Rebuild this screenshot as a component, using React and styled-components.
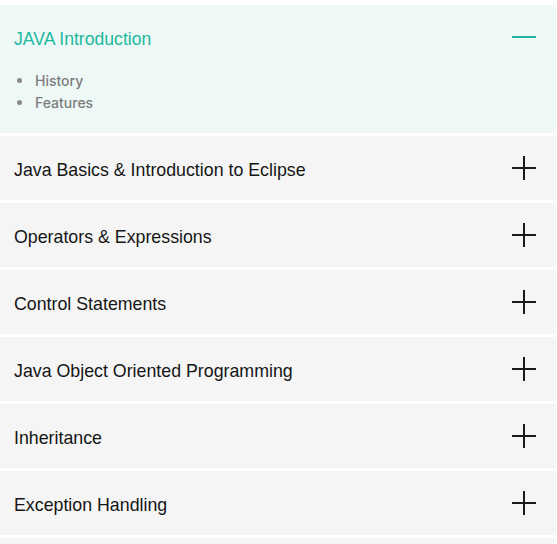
import React, { useState } from "react";
import styled, { createGlobalStyle } from "styled-components";

const GlobalStyle = createGlobalStyle`
  html, body {
    margin: 0;
    padding: 0;
    background: #ffffff;
  }
  body {
    font-family: "Liberation Sans", Arial, sans-serif;
  }
`;

const Wrapper = styled.div`
  width: 556px;
  padding-top: 5px;
  display: flex;
  flex-direction: column;
  gap: 3px;
`;

const Panel = styled.div`
  background: ${({ open }) => (open ? "#eef8f6" : "#f5f5f5")};
  display: flex;
  flex-direction: column;
`;

const Header = styled.button`
  height: 64px;
  display: flex;
  align-items: center;
  justify-content: space-between;
  padding: 0 20px 0 14px;
  border: none;
  background: transparent;
  cursor: pointer;
  text-align: left;
`;

const Title = styled.span`
  margin-top: 4px;
  font-family: "Liberation Sans", Arial, sans-serif;
  font-size: ${({ open }) => (open ? "17.6px" : "17.8px")};
  color: ${({ open }) => (open ? "#1db99e" : "#151515")};
`;

const List = styled.ul`
  list-style: none;
  margin: 0;
  padding: 0 14px 20px 17px;
`;

const Item = styled.li`
  display: flex;
  align-items: center;
  gap: 13px;
  height: 22px;
  font-family: Inter, "Open Sans", sans-serif;
  font-weight: 500;
  font-size: 14px;
  color: #7c7c7c;
`;

const Dot = styled.span`
  width: 5px;
  height: 5px;
  border-radius: 50%;
  background: #8a8a8a;
`;

const Toggle = ({ open }) =>
  open ? (
    <svg width="24" height="24" viewBox="0 0 24 24">
      <path d="M0 12h24" stroke="#1fb5a0" strokeWidth="2" />
    </svg>
  ) : (
    <svg width="24" height="24" viewBox="0 0 24 24">
      <path d="M0 12h24M12 0v24" stroke="#1a1a1a" strokeWidth="2" />
    </svg>
  );

const sections = [
  { title: "JAVA Introduction", items: ["History", "Features"] },
  { title: "Java Basics & Introduction to Eclipse", items: [] },
  { title: "Operators & Expressions", items: [] },
  { title: "Control Statements", items: [] },
  { title: "Java Object Oriented Programming", items: [] },
  { title: "Inheritance", items: [] },
  { title: "Exception Handling", items: [] },
  { title: "Multithreading", items: [] },
];

export default function App() {
  const [openIndex, setOpenIndex] = useState(0);
  return (
    <>
      <GlobalStyle />
      <Wrapper>
        {sections.map((s, i) => {
          const open = i === openIndex;
          return (
            <Panel key={s.title} open={open}>
              <Header onClick={() => setOpenIndex(open ? -1 : i)}>
                <Title open={open}>{s.title}</Title>
                <Toggle open={open} />
              </Header>
              {open && (
                <List>
                  {s.items.map((it) => (
                    <Item key={it}>
                      <Dot />
                      {it}
                    </Item>
                  ))}
                </List>
              )}
            </Panel>
          );
        })}
      </Wrapper>
    </>
  );
}
